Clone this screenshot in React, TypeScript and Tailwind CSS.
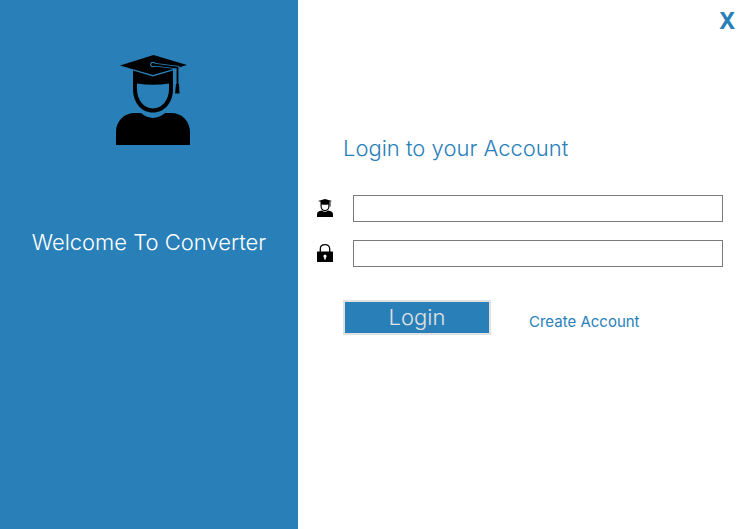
function Graduate({ className }: { className: string }) {
  return (
    <svg viewBox="0 0 74 90" className={className} aria-hidden="true">
      <path
        fill="#000"
        d="M0 90V77C0 66 8 58 19 58H25C33 64.500 41 64.500 49 58H55C66 58 74 66 74 77V90Z"
      />
      <path
        fill="#000"
        fillRule="evenodd"
        d="M17 15.500L37 21.500L57 15.500V34C57 47 49 57.500 37 57.500S17 47 17 34ZM21 28.500V34C21 45 28 53.500 37 53.500S53 45 53 34V28.500Q37 31 21 28.500Z"
      />
      <path fill="#000" d="M4 10.500L37.500 0L71 10L37 20Z" />
      <path fill="none" stroke="#2980b9" strokeWidth="3.600" d="M37 9.500L61.500 12.500V30" />
      <circle cx="37" cy="9.500" r="2.800" fill="#2980b9" />
      <path fill="none" stroke="#000" strokeWidth="1.800" d="M37 9.500L61.500 12.500V31" />
      <circle cx="37" cy="9.500" r="1.700" fill="#000" />
      <path fill="#000" d="M60 29H63L63.500 38.500H59Z" />
    </svg>
  );
}

function SmallGraduate() {
  return (
    <svg viewBox="0 0 16 18" className="h-[18px] w-4" aria-hidden="true">
      <path d="M0 18V15.500C0 13 1.500 11.800 5 11.500Q8 14 11 11.500C14.500 11.800 16 13 16 15.500V18Z" />
      <path
        fillRule="evenodd"
        d="M3.500 3H12.500V7C12.500 10 10.500 12 8 12S3.500 10 3.500 7ZM4.700 5.500V7.500C4.700 9.500 6 11 8 11S11.300 9.500 11.300 7.500V5.500Q8 6.200 4.700 5.500Z"
      />
      <path d="M1 2L8 0L15 2L8 4.200Z" />
      <path d="M12.700 2.500H13.500V7.500H12.700Z" />
    </svg>
  );
}

function Padlock() {
  return (
    <svg viewBox="0 0 16 18" className="h-[18px] w-4" aria-hidden="true">
      <path fill="none" stroke="#000" strokeWidth="1.300" d="M3.300 8.500V5C3.300 2.300 5.300.7 8 .7S12.700 2.300 12.700 5V8.500" />
      <rect y="7.500" width="16" height="10.500" rx=".5" />
      <path fill="#fff" d="M8 10.500A1.800 1.800 0 0 1 8.800 13.800V15.500H7.200V13.800A1.800 1.800 0 0 1 8 10.500Z" />
    </svg>
  );
}

const inputClass =
  "h-[27px] min-w-0 flex-1 border border-[#7a7a7a] bg-white px-1 text-sm text-black outline-none";

export default function App() {
  return (
    <div className="flex min-h-screen bg-white font-['Inter','Liberation_Sans',sans-serif] text-[#2980b9]">
      <aside className="flex w-2/5 flex-col items-center bg-[#2980b9] pt-[55px]">
        <Graduate className="ml-2 h-[90px] w-[74px]" />
        <p className="mt-20 whitespace-nowrap text-[22px] font-light leading-[34px] text-white">
          Welcome To Converter
        </p>
      </aside>
      <main className="flex flex-1 flex-col">
        <div className="flex h-10 justify-end pr-2">
          <button
            type="button"
            aria-label="Close"
            className="px-0.5 font-['Noto_Sans',sans-serif] text-[23px] font-bold leading-[38px]"
          >
            X
          </button>
        </div>
        <form className="flex flex-col pl-[19px] pr-[22px] pt-[91px]" onSubmit={(e) => e.preventDefault()}>
          <h1 className="pl-[26px] text-[22px] font-light leading-[34px]">Login to your Account</h1>
          <div className="mt-[30px] flex items-center gap-5">
            <label htmlFor="username" aria-label="Username" className="pb-0.5">
              <SmallGraduate />
            </label>
            <input id="username" type="text" className={inputClass} />
          </div>
          <div className="mt-[18px] flex items-center gap-5">
            <label htmlFor="password" aria-label="Password" className="pb-0.5">
              <Padlock />
            </label>
            <input id="password" type="password" className={inputClass} />
          </div>
          <div className="mt-[33px] flex items-center gap-[38px] pl-[26px]">
            <button
              type="submit"
              className="h-[35px] w-[148px] border-2 border-[#e1e1e1] bg-[#2980b9] pb-0.5 text-[22px] font-light leading-none text-[#e1e1e1]"
            >
              Login
            </button>
            <a href="#create" className="pt-2 text-[15px] leading-5">
              Create Account
            </a>
          </div>
        </form>
      </main>
    </div>
  );
}
